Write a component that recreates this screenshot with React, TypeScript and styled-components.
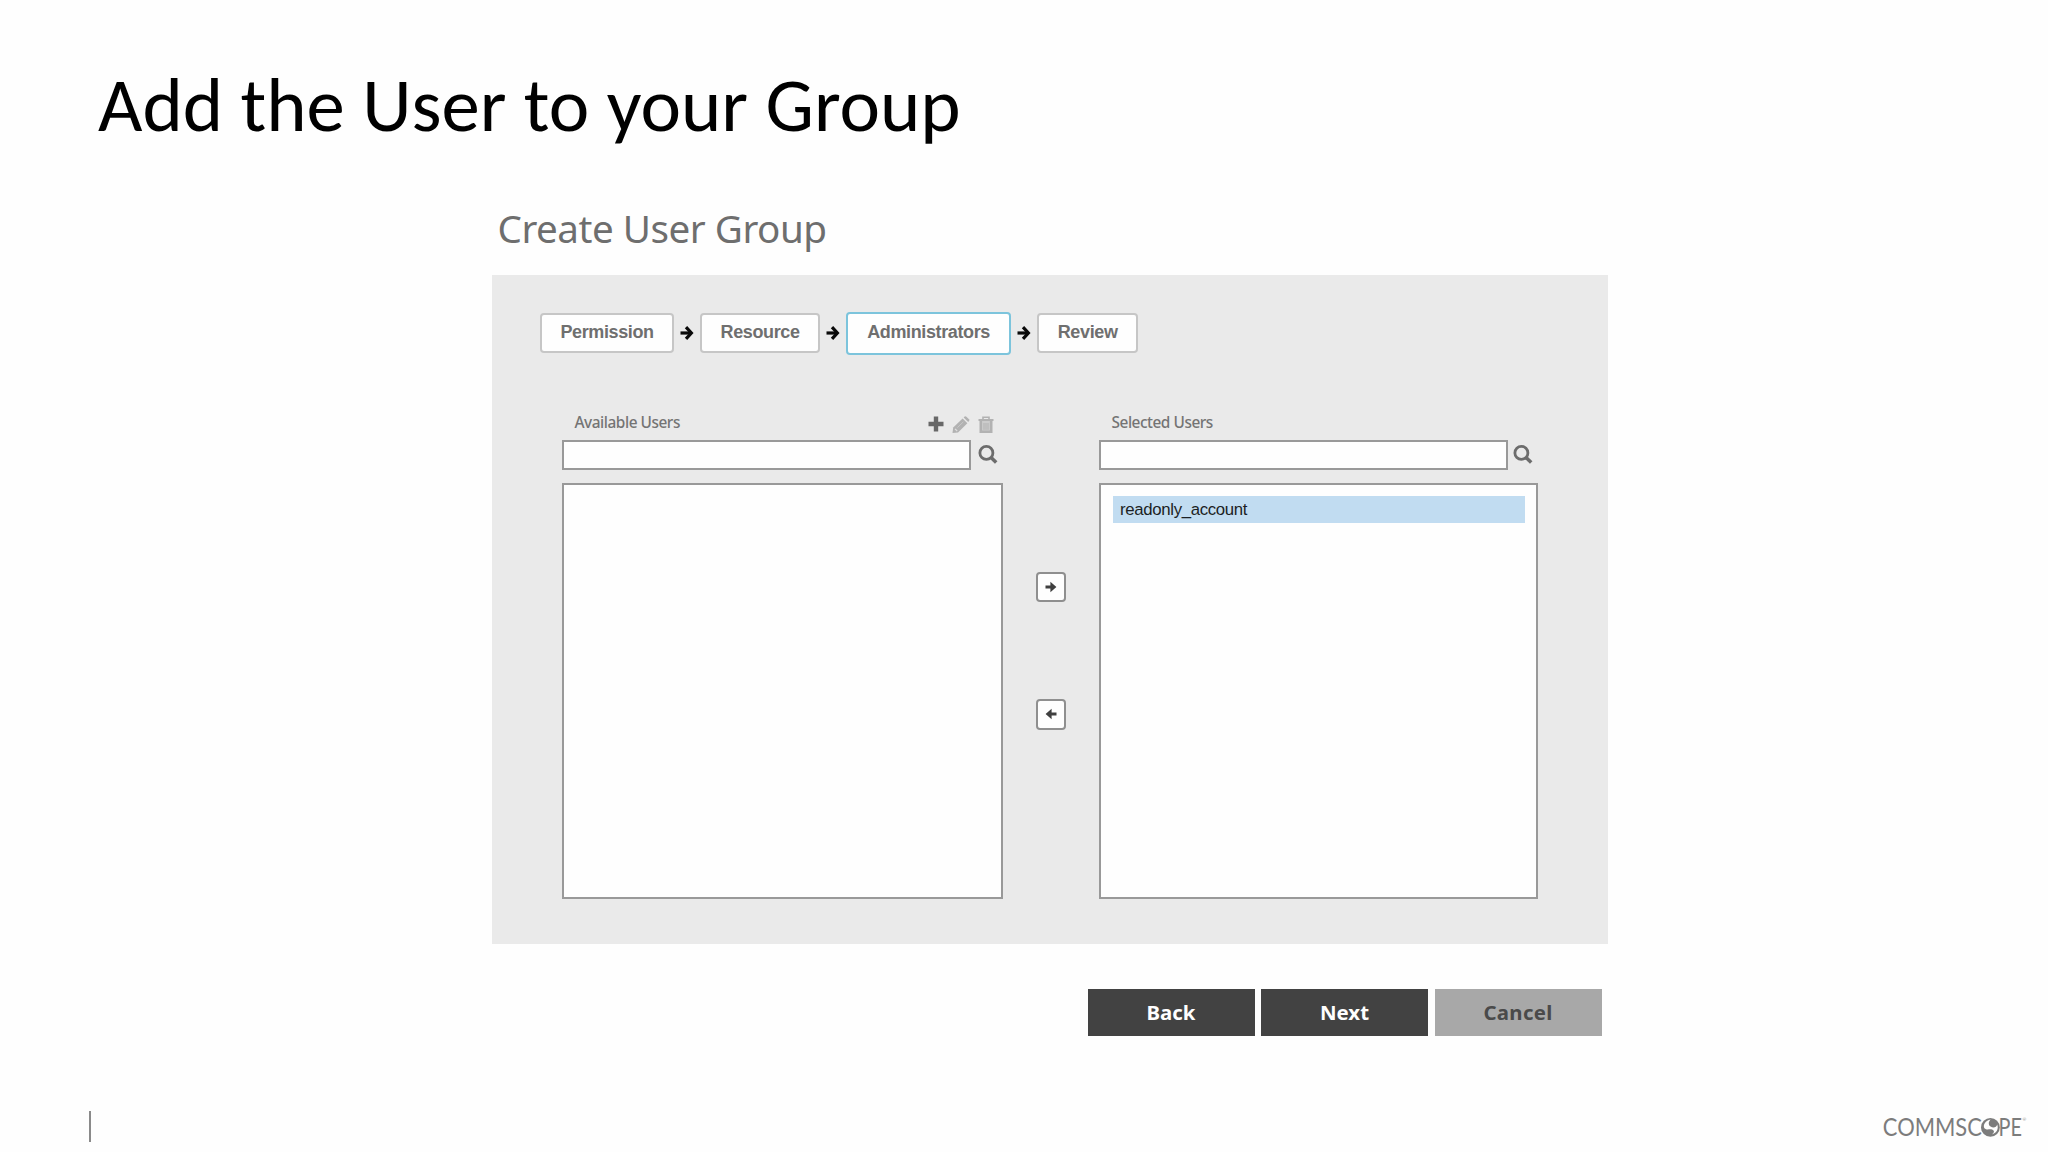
import React from 'react';
import styled, { createGlobalStyle } from 'styled-components';

const GlobalStyle = createGlobalStyle`
  *, *::before, *::after { box-sizing: border-box; }
  body { margin: 0; background: #fefefe; overflow: hidden; }
`;

const Slide = styled.div`
  width: 2048px;
  height: 1152px;
  display: flex;
  flex-direction: column;
  background: #fefefe;
  font-family: 'Liberation Sans', Arial, sans-serif;
`;

const Title = styled.h1`
  margin: 0;
  padding: 58px 0 0 98px;
  height: 205px;
  font: 400 76.8px/94px Carlito, Lato, sans-serif;
  color: #000;
`;

const Wizard = styled.main`
  width: 1116px;
  margin-left: 492px;
  display: flex;
  flex-direction: column;
`;

const WizardTitle = styled.h2`
  margin: 0;
  padding-left: 5.5px;
  height: 69.5px;
  font: 400 38.6px/46px 'Noto Sans', sans-serif;
  letter-spacing: -0.48px;
  color: #6e6e6e;
`;

const Panel = styled.section`
  height: 669.5px;
  background: #eaeaea;
  padding: 37px 69px 0 48px;
`;

const Steps = styled.nav`
  display: flex;
  align-items: center;
  height: 43px;
`;

const Step = styled.button<{ $width: number; $active?: boolean }>`
  width: ${(p) => p.$width}px;
  height: ${(p) => (p.$active ? 43 : 40)}px;
  padding: 0 0 3px;
  border: ${(p) => (p.$active ? '2px solid #7cc4dc' : '2px solid #c6c6c6')};
  border-radius: 4px;
  background: #fefefe;
  color: #6f6f6f;
  font: 700 18px/20px 'Liberation Sans', Arial, sans-serif;
  letter-spacing: -0.38px;
`;

const StepGap = styled.span`
  width: 26.3px;
  display: flex;
  justify-content: center;
`;

const Transfer = styled.div`
  display: flex;
  padding: 57px 0 0 22px;
`;

const Column = styled.div<{ $width: number }>`
  width: ${(p) => p.$width}px;
`;

const ColumnHead = styled.div`
  display: flex;
  justify-content: space-between;
  height: 28px;
  padding: 0 9px 0 12.5px;
`;

const Label = styled.span`
  padding-top: 1px;
  font: 500 15.4px/20px 'Noto Sans', sans-serif;
  letter-spacing: -0.46px;
  color: #747474;
`;

const Tools = styled.div`
  display: flex;
  gap: 8px;
  padding-top: 4px;
`;

const SearchRow = styled.div<{ $gap: number }>`
  display: flex;
  align-items: flex-start;
  gap: ${(p) => p.$gap}px;
  height: 43px;
`;

const SearchInput = styled.input`
  width: 409px;
  height: 30px;
  border: 2px solid #999;
  border-radius: 0;
  background: #fefefe;
  outline: none;
`;

const SearchIconBox = styled.span`
  display: flex;
  padding-top: 5px;
`;

const ListBox = styled.div`
  height: 416px;
  border: 2px solid #999;
  background: #fefefe;
  padding: 11.5px 11.5px 0 12px;
`;

const ListItem = styled.div`
  height: 27px;
  padding-left: 7px;
  background: #c1dcf1;
  color: #1c1f24;
  font: 400 16.8px/27px 'Liberation Sans', Arial, sans-serif;
  letter-spacing: -0.33px;
`;

const Movers = styled.div`
  width: 96px;
  display: flex;
  flex-direction: column;
  align-items: center;
  gap: 97px;
  padding-top: 160px;
`;

const MoveButton = styled.button`
  width: 30.5px;
  height: 30.5px;
  padding: 0;
  display: flex;
  align-items: center;
  justify-content: center;
  border: 2px solid #8f8f8f;
  border-radius: 4px;
  background: #fefefe;
`;

const Actions = styled.div`
  display: flex;
  justify-content: flex-end;
  gap: 6.5px;
  padding: 45px 6.5px 0 0;
`;

const Action = styled.button<{ $muted?: boolean }>`
  width: 167px;
  height: 47px;
  border: 0;
  padding: 0 0 2px;
  background: ${(p) => (p.$muted ? '#a8a8a8' : '#424242')};
  color: ${(p) => (p.$muted ? '#4a4a4a' : '#fefefe')};
  font: 700 20.4px/28px 'Noto Sans', sans-serif;
  letter-spacing: ${(p) => (p.$muted ? 0.3 : 0)}px;
`;

const Footer = styled.footer`
  display: flex;
  justify-content: space-between;
  align-items: flex-start;
  margin-top: 75px;
  padding: 0 18px 0 88.5px;
`;

const Divider = styled.span`
  width: 2px;
  height: 31px;
  background: #8a8a8a;
`;

const StepArrow = () => (
  <svg width="14" height="16" viewBox="0 0 14 16" fill="none" stroke="#0a0a0a">
    <path d="M0.5 8H11" strokeWidth="3.2" />
    <path d="M6 2.1L11.4 8L6 13.9" strokeWidth="3.2" />
  </svg>
);

const MoveArrow = ({ left }: { left?: boolean }) => (
  <svg width="12" height="12" viewBox="0 0 12 12" fill="#3f3f3f">
    <path d={left ? 'M11.5 4.6V7.4H6.6V11.2L0.6 6L6.6 0.8V4.6Z' : 'M0.5 4.6V7.4H5.4V11.2L11.4 6L5.4 0.8V4.6Z'} />
  </svg>
);

const PlusIcon = () => (
  <svg width="16" height="16" viewBox="0 0 16 16" fill="#686868">
    <path d="M5.8 0.5h4.4v5.3h5.3v4.4h-5.3v5.3H5.8v-5.3H0.5V5.8h5.3z" />
  </svg>
);

const PencilIcon = () => (
  <svg width="18" height="18" viewBox="0 0 18 18">
    <path d="M0.5 17L1.2 11.6L10.6 2.4L15.4 7.2L6 16.4Z" fill="#b2b2b2" />
    <path d="M11.6 1.6L12.6 0.6Q13.5 0 14.4 0.7L17 3.3Q17.8 4.2 17 5.1L16.2 6Z" fill="#b2b2b2" />
    <path d="M3 12.8L5.2 15" stroke="#e0e0e0" strokeWidth="1.2" />
    <path d="M5.4 11.6L11.4 5.8" stroke="#c8c8c8" strokeWidth="1" />
  </svg>
);

const TrashIcon = () => (
  <svg width="16" height="18" viewBox="0 0 16 18" fill="none" stroke="#b2b2b2">
    <path d="M0.5 4H15.5" strokeWidth="2" />
    <path d="M5 3.5V1.3H11V3.5" strokeWidth="1.6" />
    <path d="M2.8 5V15.8H13.2V5" strokeWidth="2.6" fill="#cccccc" />
    <path d="M6 7V13.8M8 7V13.8M10 7V13.8" strokeWidth="1" />
  </svg>
);

const SearchIcon = () => (
  <svg width="20" height="20" viewBox="0 0 20 20" fill="none" stroke="#6c6c6c">
    <circle cx="8.4" cy="7.9" r="6.5" strokeWidth="2.8" />
    <path d="M12.8 12.3L18.2 17.6" strokeWidth="3.5" />
  </svg>
);

const Logo = () => (
  <svg width="148" height="34" viewBox="-2 -5 148 34" fill="#7c7c7c" fontFamily="Lato, sans-serif" fontSize="25.4">
    <text x="-1.2" y="20.4" textLength="99" lengthAdjust="spacingAndGlyphs">COMMSC</text>
    <circle cx="106.4" cy="11.4" r="9.4" />
    <path
      d="M106.6 3.4C104.2 5.8 104.2 8.8 106.6 10.6C109 12.3 112.6 11.6 113.2 8.6C115 13 112.4 17.6 107.8 18.4C110.4 16.8 110.6 14.8 108.6 13.8C105.8 12.6 102.4 14.4 100.4 12.2C98.6 8.8 101.6 4.2 106.6 3.4Z"
      fill="#fefefe"
    />
    <text x="114.6" y="20.4" textLength="23.4" lengthAdjust="spacingAndGlyphs">PE</text>
    <text x="138.6" y="5.2" fontSize="4.5">®</text>
  </svg>
);

export default function App() {
  return (
    <>
      <GlobalStyle />
      <Slide>
        <Title>Add the User to your Group</Title>
        <Wizard>
          <WizardTitle>Create User Group</WizardTitle>
          <Panel>
            <Steps>
              <Step $width={134}>Permission</Step>
              <StepGap><StepArrow /></StepGap>
              <Step $width={119.5}>Resource</Step>
              <StepGap><StepArrow /></StepGap>
              <Step $width={165} $active>Administrators</Step>
              <StepGap><StepArrow /></StepGap>
              <Step $width={100.5}>Review</Step>
            </Steps>
            <Transfer>
              <Column $width={441}>
                <ColumnHead>
                  <Label>Available Users</Label>
                  <Tools>
                    <PlusIcon />
                    <PencilIcon />
                    <TrashIcon />
                  </Tools>
                </ColumnHead>
                <SearchRow $gap={7}>
                  <SearchInput />
                  <SearchIconBox><SearchIcon /></SearchIconBox>
                </SearchRow>
                <ListBox />
              </Column>
              <Movers>
                <MoveButton><MoveArrow /></MoveButton>
                <MoveButton><MoveArrow left /></MoveButton>
              </Movers>
              <Column $width={439}>
                <ColumnHead>
                  <Label>Selected Users</Label>
                </ColumnHead>
                <SearchRow $gap={5}>
                  <SearchInput />
                  <SearchIconBox><SearchIcon /></SearchIconBox>
                </SearchRow>
                <ListBox>
                  <ListItem>readonly_account</ListItem>
                </ListBox>
              </Column>
            </Transfer>
          </Panel>
          <Actions>
            <Action>Back</Action>
            <Action>Next</Action>
            <Action $muted>Cancel</Action>
          </Actions>
        </Wizard>
        <Footer>
          <Divider />
          <Logo />
        </Footer>
      </Slide>
    </>
  );
}
